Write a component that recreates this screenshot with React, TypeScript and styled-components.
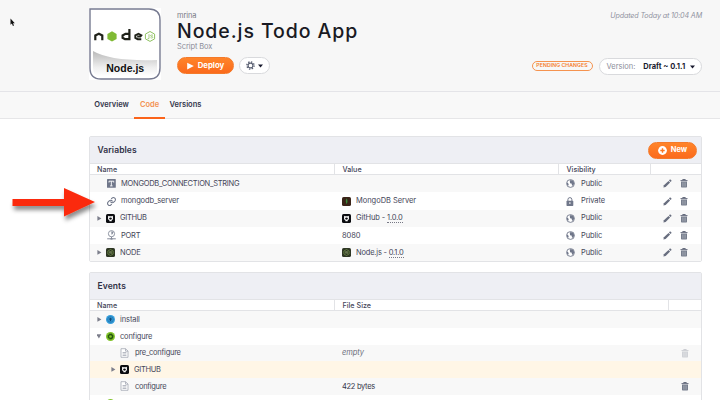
import React from "react";
import styled, { createGlobalStyle, css } from "styled-components";

const Global = createGlobalStyle`
  * { box-sizing: border-box; }
  body { margin: 0; background: #fff; font-family: Inter, "Open Sans", sans-serif; color: #454659; overflow: hidden; }
  svg { display: block; flex: none; }
`;

const Page = styled.div`
  width: 720px;
  height: 400px;
  overflow: hidden;
  position: relative;
`;

const Header = styled.header`
  height: 92px;
  padding: 8px 18px 0 89px;
  display: flex;
  background: #f7f7f7;
  border-bottom: 1px solid #e4e4e8;
`;

const Logo = styled.div`
  width: 72px;
  height: 72px;
  background: #fff;
`;

const Summary = styled.div`
  margin-left: 16px;
  width: 260px;
  display: flex;
  flex-direction: column;
`;

const Label = styled.span<{ $size?: number; $weight?: number; $gap?: number; $color?: string; $italic?: boolean }>`
  display: block;
  white-space: nowrap;
  line-height: 1.25;
  font-size: ${(p) => p.$size ?? 7.5}px;
  font-weight: ${(p) => p.$weight ?? 400};
  letter-spacing: ${(p) => p.$gap ?? 0}px;
  color: ${(p) => p.$color ?? "inherit"};
  font-style: ${(p) => (p.$italic ? "italic" : "normal")};
`;

const Owner = styled(Label)`
  height: 10px;
  margin-top: 3px;
`;

const Title = styled.h1`
  margin: 0;
  height: 21px;
  line-height: 20px;
  font-size: 19.5px;
  font-weight: 500;
  letter-spacing: 0.92px;
  color: #191a23;
  white-space: nowrap;
`;

const Buttons = styled.div`
  margin-top: 6px;
  display: flex;
  gap: 5px;
`;

const Pill = styled.button<{ $primary?: boolean; $width: number }>`
  width: ${(p) => p.$width}px;
  height: 17px;
  padding: 0;
  border: 1px solid #d9dadd;
  border-radius: 9px;
  background: #fff;
  color: #191a2e;
  font-family: inherit;
  display: flex;
  align-items: center;
  justify-content: center;
  gap: 3px;
  ${(p) =>
    p.$primary &&
    css`
      border-color: #f47a2a;
      background: linear-gradient(#ff8429, #fb6a1c);
      color: #fff;
      gap: 4px;
    `}
`;

const HeaderSide = styled.div`
  flex: 1;
  display: flex;
  flex-direction: column;
  align-items: flex-end;
  justify-content: space-between;
  padding: 3px 0 16px;
`;

const Status = styled.div`
  display: flex;
  align-items: center;
  gap: 6px;
`;

const Badge = styled.div`
  width: 61px;
  height: 10px;
  margin-top: -2px;
  border: 1px solid #f5934f;
  border-radius: 5px;
  display: flex;
  align-items: center;
  justify-content: center;
  color: #f57c2b;
`;

const VersionPill = styled(Pill)`
  justify-content: flex-start;
  padding: 0 7px;
`;

const VersionName = styled(Label)`
  margin-left: 5px;
  margin-right: 2px;
`;

const Tabs = styled.nav`
  height: 27px;
  padding-left: 89px;
  display: flex;
  background: #f8f8f8;
  border-bottom: 1px solid #e6e6e8;
`;

const Tab = styled.a<{ $active?: boolean; $width: number }>`
  width: ${(p) => p.$width}px;
  height: 27px;
  padding-top: 8px;
  display: flex;
  justify-content: center;
  color: ${(p) => (p.$active ? "#f39252" : "#32344a")};
  border-bottom: 2px solid ${(p) => (p.$active ? "#fb641b" : "transparent")};
`;

const Panels = styled.main`
  padding: 17px 18px 0 88.5px;
  display: flex;
  flex-direction: column;
  gap: 10.3px;
`;

const Panel = styled.section`
  border: 1px solid #e2e3e6;
  border-radius: 2px;
`;

const PanelHead = styled.div<{ $height: number }>`
  height: ${(p) => p.$height}px;
  padding: 0 4px 0 8px;
  display: flex;
  align-items: center;
  justify-content: space-between;
  background: #eeeff4;
  border-bottom: 1px solid #e2e3e6;
`;

const Grid = styled.div<{ $cols: string; $height: number; $tone?: string; $head?: boolean }>`
  display: grid;
  grid-template-columns: ${(p) => p.$cols};
  height: ${(p) => p.$height}px;
  background: ${(p) => p.$tone ?? "#fff"};
  ${(p) =>
    p.$head &&
    css`
      border-bottom: 1px solid #e2e3e6;
      color: #454659;
      > * + * {
        border-left: 1px solid #e2e3e6;
      }
    `}
`;

const Cell = styled.div<{ $pad?: number; $gap?: number }>`
  display: flex;
  align-items: center;
  padding-left: ${(p) => p.$pad ?? 7.5}px;
  gap: ${(p) => p.$gap ?? 5}px;
  min-width: 0;
`;

const Toggle = styled.span`
  width: 9px;
  flex: none;
  margin-right: -5px;
`;

const VersionLink = styled.span`
  border-bottom: 1px dotted #777885;
`;

const Pointer = styled.svg`
  position: absolute;
  left: 0;
  top: 180px;
`;

const Cursor = styled.svg`
  position: absolute;
  left: 10px;
  top: 18px;
`;

const slate = "#70778a";

const NodeLogo = () => (
  <svg width="72" height="72" viewBox="0 0 72 72">
    <defs>
      <linearGradient id="curl" x1="0" y1="0" x2="0" y2="1">
        <stop offset="0" stopColor="#b9b9b9" />
        <stop offset=".65" stopColor="#eee" />
        <stop offset="1" stopColor="#fff" />
      </linearGradient>
    </defs>
    <path d="M4 43 Q22 53.500 68 52 V64 Q68 68 62 68 H11 Q4 68 4 60Z" fill="url(#curl)" />
    <path d="M1 1 H60 Q71 1 71 12 V60 Q71 71 60 71 H12 Q1 71 1 60Z" fill="none" stroke="#777b91" strokeWidth="1.4" />
    <g fill="none" stroke="#1f2119" strokeWidth="2.2">
      <path d="M6.300 32.300V27.400L9.900 25.800L13.300 27.400V32.300" />
      <path d="M40.400 21V31.200H36L33.600 29.800V27.500L36.500 25.900H40.400" />
      <path d="M52.300 31.200H48.700L46.300 29.900V27.300L49.500 25.700L52.400 27.200L51.400 28.500H48.200" strokeWidth="1.900" />
    </g>
    <path d="M23 24l4.6 2.6v5L23 34.2l-4.6-2.6v-5z" fill="#80ba35" transform="translate(0 -.7)" />
    <path d="M61 23.5l4.6 2.6v4.8L61 33.4l-4.6-2.5v-4.8z" fill="none" stroke="#8fc261" />
    <path d="M60 26.2v4.3l-1.5.4M64 27.300c-3-1-3 1-1.300 1.200 2.300.4.8 2.200-1.200 1.200" fill="none" stroke="#8fc261" strokeWidth=".8" />
    <text x="36.2" y="63.7" textAnchor="middle" fontFamily="Liberation Sans" fontWeight="700" fontSize="10.5" textLength="38" fill="#101010">Node.js</text>
  </svg>
);

const Play = () => (
  <svg width="7" height="8" viewBox="0 0 7 8"><path d="M.2 .8L6.8 4.1L.2 7.4Z" fill="#fff" /></svg>
);

const Gear = () => (
  <svg width="9" height="9" viewBox="0 0 9 9">
    <circle cx="4.5" cy="4.5" r="3.6" fill="none" stroke="#5a6072" strokeWidth="1.4" strokeDasharray="1.4 1.43" />
    <circle cx="4.5" cy="4.5" r="2.4" fill="none" stroke="#5a6072" strokeWidth="1.1" />
  </svg>
);

const Caret = () => (
  <svg width="5" height="4" viewBox="0 0 5 4"><path d="M0 .5H5L2.5 3.5Z" fill="#191a2e" /></svg>
);

const Plus = () => (
  <svg width="9" height="9" viewBox="0 0 9 9">
    <circle cx="4.5" cy="4.5" r="4.4" fill="#fff" />
    <path d="M4.5 2.3V6.7M2.3 4.5H6.7" stroke="#fb7622" strokeWidth="1.4" />
  </svg>
);

const Triangle = ({ open }: { open?: boolean }) => (
  <svg width="5" height="5" viewBox="0 0 5 5">
    <path d={open ? "M-.5 .3H4.3L1.9 4.6Z" : "M.4 0L4.4 2.4L.4 4.8Z"} fill="#7c7e8b" />
  </svg>
);

const TextIcon = () => (
  <svg width="9" height="9" viewBox="0 0 9 9">
    <rect width="8.8" height="8.8" rx=".6" fill={slate} />
    <path d="M2 3.5V2.2H6.7V3.5M4.35 2.2V6.8M3.1 6.9H5.6" fill="none" stroke="#fff" strokeWidth=".9" />
  </svg>
);

const LinkIcon = () => (
  <svg width="9" height="9" viewBox="1 1 22 22" fill="none" stroke={slate} strokeWidth="2.5" strokeLinecap="round">
    <path d="M10 13a5 5 0 0 0 7.5.5l3-3a5 5 0 0 0-7-7L12 5" />
    <path d="M14 11a5 5 0 0 0-7.500-.5l-3 3a5 5 0 0 0 7 7L12 19" />
  </svg>
);

const PortIcon = () => (
  <svg width="9" height="10" viewBox="0 0 9 10" fill="none" stroke="#858b9a">
    <circle cx="4.5" cy="3.7" r="3.1" strokeWidth=".9" />
    <path d="M4.300 1.200L6.500 2L5.700 4.100L4.500 4.800Z" fill="#858b9a" stroke="none" />
    <path d="M4.500 6.700V8.500M.2 8.800H8.800" strokeWidth="1" />
    <path d="M3.500 8.800H5.500" strokeWidth="1.700" />
  </svg>
);

const AppIcon = ({ kind }: { kind: "github" | "node" | "mongo" }) => (
  <svg width="9" height="9" viewBox="0 0 9 9">
    <rect width="9" height="9" rx="1.6" fill={kind === "github" ? "#0b0c10" : kind === "node" ? "#2e3624" : "#3a2418"} />
    {kind === "github" && (
      <>
        <path d="M2.200 1.800L3.400 2.300H5.600L6.800 1.800L7 4.500Q6.700 5.900 5.700 6.300V7.300H3.400V6.300Q2.300 5.900 2 4.500Z" fill="#fff" />
        <ellipse cx="4.500" cy="4.600" rx="1.400" ry="1.100" fill="#0b0c10" />
      </>
    )}
    {kind === "node" && (
      <g fill="none" stroke="#76954c" strokeWidth=".7">
        <path d="M4.500 1.500L7.100 3V6L4.500 7.500L1.900 6V3Z" />
        <path d="M3.600 3.300V5.500M5.700 3.500H4.500V4.500H5.600V5.400H4.400" stroke="#849764" />
      </g>
    )}
    {kind === "mongo" && <path d="M4.500 1.300Q6.500 4.200 4.500 7.300Q2.900 4.300 4.500 1.300Z" fill="#3c8b3c" />}
  </svg>
);

const Globe = () => (
  <svg width="9" height="9" viewBox="0 0 9 9">
    <circle cx="4.500" cy="4.500" r="3.900" fill="#fff" stroke={slate} strokeWidth=".9" />
    <path d="M4.300 .9L7.200 1.700L8.300 4.500L6.900 7L5.800 6.100L5.900 4.700L4.100 4.200L3.800 2.400ZM.8 3.400L2.200 4.300L2.700 5.500L2.200 6.800L1.100 6Z" fill={slate} />
  </svg>
);

const Lock = () => (
  <svg width="9" height="9" viewBox="0 0 9 9">
    <path d="M1.900 4V2.700Q1.900 .6 3.900 .6T5.900 2.700V4" fill="none" stroke={slate} strokeWidth="1" />
    <rect x=".5" y="3.800" width="6.800" height="5.100" rx=".6" fill={slate} />
    <path d="M3.900 5.200V7" stroke="#fff" />
  </svg>
);

const Pencil = () => (
  <svg width="9" height="9" viewBox="0 0 9 9" fill="#686e7f">
    <path d="M.4 8.500L.9 6.200L5.500 1.900L7.100 3.500L2.600 8Z" />
    <path d="M6 1.400L6.800 .6Q7.300 .2 7.800 .7L8.300 1.200Q8.700 1.700 8.300 2.200L7.500 3Z" />
  </svg>
);

const Trash = ({ faded }: { faded?: boolean }) => (
  <svg width="8" height="9" viewBox="0 0 8 9" opacity={faded ? 0.3 : 1}>
    <path d="M.5 1.600H7.500M2.700 1.200V.5H5.300V1.200" fill="none" stroke="#686e7f" strokeWidth="1" />
    <path d="M1 2.600H7V7.700Q7 8.500 6.300 8.500H1.700Q1 8.500 1 7.700Z" fill="#777e8d" />
    <path d="M2.700 3.400V7.600M4 3.400V7.600M5.300 3.400V7.600" stroke="#b9bdc6" strokeWidth=".5" />
  </svg>
);

const EventIcon = ({ kind }: { kind: "install" | "configure" }) => (
  <svg width="9" height="9" viewBox="0 0 9 9">
    <circle cx="4.500" cy="4.500" r="4.500" fill={kind === "install" ? "#369edb" : "#82c32b"} />
    {kind === "install" ? (
      <>
        <circle cx="4.500" cy="4.500" r="2.800" fill="none" stroke="#1b6da7" strokeWidth=".7" />
        <path d="M4.500 2.500L6.500 4.600H5.200V6.300H3.800V4.600H2.500Z" fill="#114875" />
      </>
    ) : (
      <>
        <circle cx="4.500" cy="4.500" r="2" fill="#82c32b" stroke="#24570d" strokeWidth="1.300" />
        <circle cx="4.500" cy="4.500" r="2.800" fill="none" stroke="#24570d" strokeWidth=".7" strokeDasharray="1.100 1.100" />
      </>
    )}
  </svg>
);

const FileIcon = () => (
  <svg width="9" height="10" viewBox="0 0 9 10" fill="none" stroke="#9a9eab" strokeWidth=".7">
    <path d="M1 .7H5.600L8 3.100V9.300H1Z" fill="#fff" />
    <path d="M5.500 .7V3.200H8M2.600 4.500H6.400M2.600 6H6.400M2.600 7.500H6.400" />
  </svg>
);

const VAR_COLS = "244.5px 224px 91.5px 1fr";
const EVENT_COLS = "244.5px 334px 1fr";
const EVENT_ROW = 16.7;

type Variable = {
  name: string;
  gap: number;
  icon: React.ReactNode;
  expandable?: boolean;
  value?: React.ReactNode;
  secret?: boolean;
};

const variables: Variable[] = [
  { name: "MONGODB_CONNECTION_STRING", gap: -0.26, icon: <TextIcon /> },
  {
    name: "mongodb_server",
    gap: -0.12,
    icon: <LinkIcon />,
    secret: true,
    value: <><AppIcon kind="mongo" /><Label $gap={-0.3 / 9}>MongoDB Server</Label></>,
  },
  {
    name: "GITHUB",
    gap: -0.3,
    icon: <AppIcon kind="github" />,
    expandable: true,
    value: <><AppIcon kind="github" /><Label $gap={-0.12}>GitHub - <VersionLink>1.0.0</VersionLink></Label></>,
  },
  { name: "PORT", gap: -0.2, icon: <PortIcon />, value: <Label $gap={-0.1}>8080</Label> },
  {
    name: "NODE",
    gap: -0.2,
    icon: <AppIcon kind="node" />,
    expandable: true,
    value: <><AppIcon kind="node" /><Label $gap={-0.2}>Node.js - <VersionLink>0.1.0</VersionLink></Label></>,
  },
];

export default function App() {
  return (
    <>
      <Global />
      <Page>
        <Header>
          <Logo><NodeLogo /></Logo>
          <Summary>
            <Owner $color="#777985" $gap={-0.1}>mrina</Owner>
            <Title>Node.js Todo App</Title>
            <Label $color="#8b8d99" $gap={-0.1}>Script Box</Label>
            <Buttons>
              <Pill $primary $width={57}><Play /><Label $size={7.8} $weight={700}>Deploy</Label></Pill>
              <Pill $width={31}><Gear /><Caret /></Pill>
            </Buttons>
          </Summary>
          <HeaderSide>
            <Label $italic $color="#9092a0" $size={7.2} $gap={-0.15}>Updated Today at 10:04 AM</Label>
            <Status>
              <Badge><Label $size={5.2} $weight={600} $gap={0.05}>PENDING CHANGES</Label></Badge>
              <VersionPill $width={103.5}>
                <Label $color="#8b8d99">Version:</Label>
                <VersionName $weight={700}>Draft ~ 0.1.1</VersionName>
                <Caret />
              </VersionPill>
            </Status>
          </HeaderSide>
        </Header>
        <Tabs>
          <Tab $width={45}><Label $weight={600}>Overview</Label></Tab>
          <Tab $width={31} $active><Label $weight={600}>Code</Label></Tab>
          <Tab $width={41}><Label $weight={600}>Versions</Label></Tab>
        </Tabs>
        <Panels>
          <Panel>
            <PanelHead $height={27}>
              <Label $size={8.5} $weight={600} $gap={0.1} $color="#2e3046">Variables</Label>
              <Pill $primary $width={49}><Plus /><Label $weight={700}>New</Label></Pill>
            </PanelHead>
            <Grid $cols={VAR_COLS} $height={11.4} $head>
              <Cell><Label $weight={500} $size={7.2}>Name</Label></Cell>
              <Cell><Label $weight={500} $size={7.2}>Value</Label></Cell>
              <Cell><Label $weight={500} $size={7.2}>Visibility</Label></Cell>
              <Cell />
            </Grid>
            {variables.map((v, i) => (
              <Grid key={v.name} $cols={VAR_COLS} $height={17.1} $tone={i % 2 ? "#fff" : "#f8f8f8"}>
                <Cell $gap={v.expandable ? 5 : 5.5}>
                  <Toggle>{v.expandable && <Triangle />}</Toggle>
                  {v.icon}
                  <Label $gap={v.gap}>{v.name}</Label>
                </Cell>
                <Cell $pad={8}>{v.value}</Cell>
                <Cell $pad={8} $gap={6}>
                  {v.secret ? <Lock /> : <Globe />}
                  <Label $gap={-0.1}>{v.secret ? "Private" : "Public"}</Label>
                </Cell>
                <Cell $pad={13} $gap={8}><Pencil /><Trash /></Cell>
              </Grid>
            ))}
          </Panel>
          <Panel>
            <PanelHead $height={26.6}>
              <Label $size={8.5} $weight={600} $gap={0.1} $color="#2e3046">Events</Label>
            </PanelHead>
            <Grid $cols={EVENT_COLS} $height={11.6} $head>
              <Cell><Label $weight={500} $size={7.2}>Name</Label></Cell>
              <Cell><Label $weight={500} $size={7.2}>File Size</Label></Cell>
              <Cell />
            </Grid>
            <Grid $cols={EVENT_COLS} $height={EVENT_ROW} $tone="#f8f8f8">
              <Cell><Toggle><Triangle /></Toggle><EventIcon kind="install" /><Label $gap={-0.1}>install</Label></Cell>
            </Grid>
            <Grid $cols={EVENT_COLS} $height={EVENT_ROW}>
              <Cell><Toggle><Triangle open /></Toggle><EventIcon kind="configure" /><Label $gap={-0.2}>configure</Label></Cell>
            </Grid>
            <Grid $cols={EVENT_COLS} $height={EVENT_ROW} $tone="#f8f8f8">
              <Cell $pad={30.5} $gap={6}><FileIcon /><Label $gap={-0.25}>pre_configure</Label></Cell>
              <Cell $pad={8}><Label $italic $color="#6b6d7a" $gap={-0.1}>empty</Label></Cell>
              <Cell $pad={13}><Trash faded /></Cell>
            </Grid>
            <Grid $cols={EVENT_COLS} $height={EVENT_ROW} $tone="#fff6e6">
              <Cell $pad={21.5}><Toggle><Triangle /></Toggle><AppIcon kind="github" /><Label $gap={-0.3}>GITHUB</Label></Cell>
            </Grid>
            <Grid $cols={EVENT_COLS} $height={EVENT_ROW} $tone="#f8f8f8">
              <Cell $pad={30.5} $gap={6}><FileIcon /><Label $gap={-0.3}>configure</Label></Cell>
              <Cell $pad={8}><Label $color="#34364a" $gap={-0.3}>422 bytes</Label></Cell>
              <Cell $pad={13}><Trash /></Cell>
            </Grid>
            <Grid $cols={EVENT_COLS} $height={EVENT_ROW}>
              <Cell><Toggle /><EventIcon kind="configure" /></Cell>
            </Grid>
          </Panel>
        </Panels>
        <Pointer width="110" height="45" viewBox="0 0 110 45">
          <defs>
            <filter id="shade" x="-10%" y="-20%" width="125%" height="160%">
              <feDropShadow dx="1.500" dy="4" stdDeviation="2.300" floodColor="#000" floodOpacity=".45" />
            </filter>
          </defs>
          <path d="M12.500 19H64V8L95 22L64 36.500V26H12.500Z" fill="#fb2b0b" filter="url(#shade)" />
        </Pointer>
        <Cursor width="6" height="9" viewBox="0 0 6 9">
          <path d="M.5 .5V6.800L1.900 5.600L2.900 8L4 7.500L3 5.200H4.800Z" fill="#111" />
        </Cursor>
      </Page>
    </>
  );
}
